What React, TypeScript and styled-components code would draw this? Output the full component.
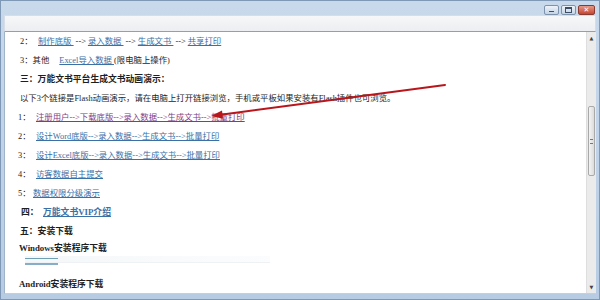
import styled, { createGlobalStyle } from "styled-components";

const GlobalStyle = createGlobalStyle`
  html, body { margin: 0; padding: 0; background: #ffffff; }
  body { width: 600px; height: 300px; overflow: hidden; }
`;

const Window = styled.div`
  width: 600px;
  height: 300px;
  display: flex;
  flex-direction: column;
  background: linear-gradient(#c9d9ec, #b7cce3);
  box-sizing: border-box;
  border: 1px solid #7e98b6;
`;

const TitleBar = styled.div`
  height: 14px;
  display: flex;
  justify-content: flex-end;
  align-items: flex-start;
  padding: 4px 4px 0 0;
  box-sizing: border-box;
  gap: 2px;
`;

const CaptionButton = styled.div<{ $close?: boolean }>`
  width: ${(p) => (p.$close ? 15 : 13)}px;
  height: 8px;
  border: 1px solid ${(p) => (p.$close ? "#8a3a30" : "#7d92ab")};
  border-radius: 2px;
  background: ${(p) =>
    p.$close
      ? "linear-gradient(#e49a8a, #c7452f)"
      : "linear-gradient(#eef3f9, #c3d3e6)"};
  display: flex;
  align-items: center;
  justify-content: center;
  font: bold 7px "DejaVu Sans", sans-serif;
  color: #ffffff;
  line-height: 1;
`;

const MinGlyph = styled.div`
  width: 5px;
  height: 1px;
  margin-top: 3px;
  background: #3c4f66;
`;

const MaxGlyph = styled.div`
  width: 5px;
  height: 3px;
  border: 1px solid #3c4f66;
  border-top-width: 2px;
`;

const Frame = styled.div`
  flex: 1;
  display: flex;
  flex-direction: column;
  padding: 0 3px 5px 3px;
  min-height: 0;
`;

const MenuBand = styled.div`
  height: 17px;
  background: linear-gradient(#f6f7f9, #eceef1);
  border: 1px solid #d6dde6;
  border-bottom: 1px solid #7fa3cc;
  box-sizing: border-box;
`;

const Body = styled.div`
  flex: 1;
  display: flex;
  min-height: 0;
  border-left: 1px solid #9fb3c9;
  border-bottom: 1px solid #c5cfda;
`;

const Content = styled.div`
  flex: 1;
  position: relative;
  background: #ffffff;
  overflow: hidden;
  font-family: "Liberation Serif", "Noto Sans CJK SC", serif;
  font-size: 8.4px;
  color: #1e1e1e;
`;

const Line = styled.div<{ $h?: number; $indent?: number; $bold?: boolean }>`
  height: ${(p) => p.$h ?? 19}px;
  line-height: ${(p) => p.$h ?? 19}px;
  padding-left: ${(p) => p.$indent ?? 15}px;
  font-weight: ${(p) => (p.$bold ? 700 : 400)};
  font-size: ${(p) => (p.$bold ? 8.8 : 8.4)}px;
  white-space: nowrap;
`;

const Num = styled.span<{ $w?: number }>`
  display: inline-block;
  width: ${(p) => p.$w ?? 18}px;
`;

const Link = styled.a<{ $visited?: boolean; $bold?: boolean; $gap?: number }>`
  color: ${(p) => (p.$visited ? "#7f3d86" : "#3a70a6")};
  font-weight: ${(p) => (p.$bold ? 700 : 400)};
  text-decoration: underline;
  white-space: pre;
  margin-left: ${(p) => p.$gap ?? 0}px;
`;

const Sep = styled.span`
  padding: 0 2px;
`;

const FaintLink = styled.span`
  display: inline-block;
  height: 6px;
  width: 245px;
  border-bottom: 1px solid #eef2f5;
  background: linear-gradient(90deg, #f4f7f9, #fbfcfd);
`;

const FaintHead = styled.span`
  display: block;
  width: 33px;
  height: 4px;
  border-top: 1px solid #6fa0b3;
  border-bottom: 2px solid #88adc8;
  margin-top: 2px;
`;

const Scrollbar = styled.div`
  width: 9px;
  display: flex;
  flex-direction: column;
  align-items: center;
  background: #ebebeb;
  border-left: 1px solid #dedede;
`;

const ScrollArrow = styled.div`
  height: 12px;
  display: flex;
  align-items: center;
  justify-content: center;
  font: 5px "DejaVu Sans", sans-serif;
  color: #444;
`;

const Track = styled.div`
  flex: 1;
  width: 100%;
  padding-top: 62px;
  box-sizing: border-box;
`;

const Thumb = styled.div`
  height: 70px;
  width: 7px;
  margin-left: 1px;
  border: 1px solid #a9a9a9;
  border-radius: 2px;
  box-sizing: border-box;
  background: linear-gradient(90deg, #f4f4f4, #dcdcdc);
  display: flex;
  align-items: center;
  justify-content: center;
`;

const Grip = styled.div`
  width: 3px;
  height: 3px;
  border-top: 1px solid #777;
  border-bottom: 1px solid #777;
`;

const Overlay = styled.svg`
  position: absolute;
  left: 0;
  top: 0;
  pointer-events: none;
`;

export default function App() {
  return (
    <>
      <GlobalStyle />
      <Window>
        <TitleBar>
          <CaptionButton>
            <MinGlyph />
          </CaptionButton>
          <CaptionButton>
            <MaxGlyph />
          </CaptionButton>
          <CaptionButton $close>✕</CaptionButton>
        </TitleBar>
        <Frame>
          <MenuBand />
          <Body>
            <Content>
              <Line>
                <Num>2：</Num>
                <Link>制作底版 </Link>
                <Sep>--&gt;</Sep>
                <Link>录入数据 </Link>
                <Sep>--&gt;</Sep>
                <Link>生成文书 </Link>
                <Sep>--&gt;</Sep>
                <Link>共享打印</Link>
              </Line>
              <Line>
                3：其他<Link $gap={10}>Excel导入数据 </Link>(限电脑上操作)
              </Line>
              <Line $bold>三：万能文书平台生成文书动画演示：</Line>
              <Line>
                以下3个链接是Flash动画演示，请在电脑上打开链接浏览，手机或平板如果安装有Flash插件也可浏览。
              </Line>
              <Line $indent={13}>
                <Num>1：</Num>
                <Link $visited>注册用户--&gt;下载底版--&gt;录入数据--&gt;生成文书--&gt;批量打印</Link>
              </Line>
              <Line $indent={13}>
                <Num>2：</Num>
                <Link>设计Word底版--&gt;录入数据--&gt;生成文书--&gt;批量打印</Link>
              </Line>
              <Line $indent={13}>
                <Num>3：</Num>
                <Link>设计Excel底版--&gt;录入数据--&gt;生成文书--&gt;批量打印</Link>
              </Line>
              <Line $indent={13}>
                <Num>4：</Num>
                <Link>访客数据自主提交</Link>
              </Line>
              <Line $indent={13}>
                <Num $w={15}>5：</Num>
                <Link>数据权限分级演示</Link>
              </Line>
              <Line $bold $indent={16}>
                <Num $w={22}>四：</Num>
                <Link $bold>万能文书VIP介绍</Link>
              </Line>
              <Line $bold>五：安装下载</Line>
              <Line $bold $h={15} $indent={14}>
                Windows安装程序下载
              </Line>
              <Line $h={10} $indent={20}>
                <FaintLink>
                  <FaintHead />
                </FaintLink>
              </Line>
              <Line $h={11} />
              <Line $bold $h={15} $indent={14}>
                Android安装程序下载
              </Line>
              <Overlay width="582" height="262">
                <line
                  x1="440"
                  y1="53"
                  x2="214"
                  y2="83"
                  stroke="#b8161b"
                  strokeWidth="2"
                  strokeLinecap="round"
                />
                <polygon points="206,84 217,78.5 218,86.7" fill="#b8161b" />
              </Overlay>
            </Content>
            <Scrollbar>
              <ScrollArrow>▲</ScrollArrow>
              <Track>
                <Thumb>
                  <Grip />
                </Thumb>
              </Track>
              <ScrollArrow>▼</ScrollArrow>
            </Scrollbar>
          </Body>
        </Frame>
      </Window>
    </>
  );
}
